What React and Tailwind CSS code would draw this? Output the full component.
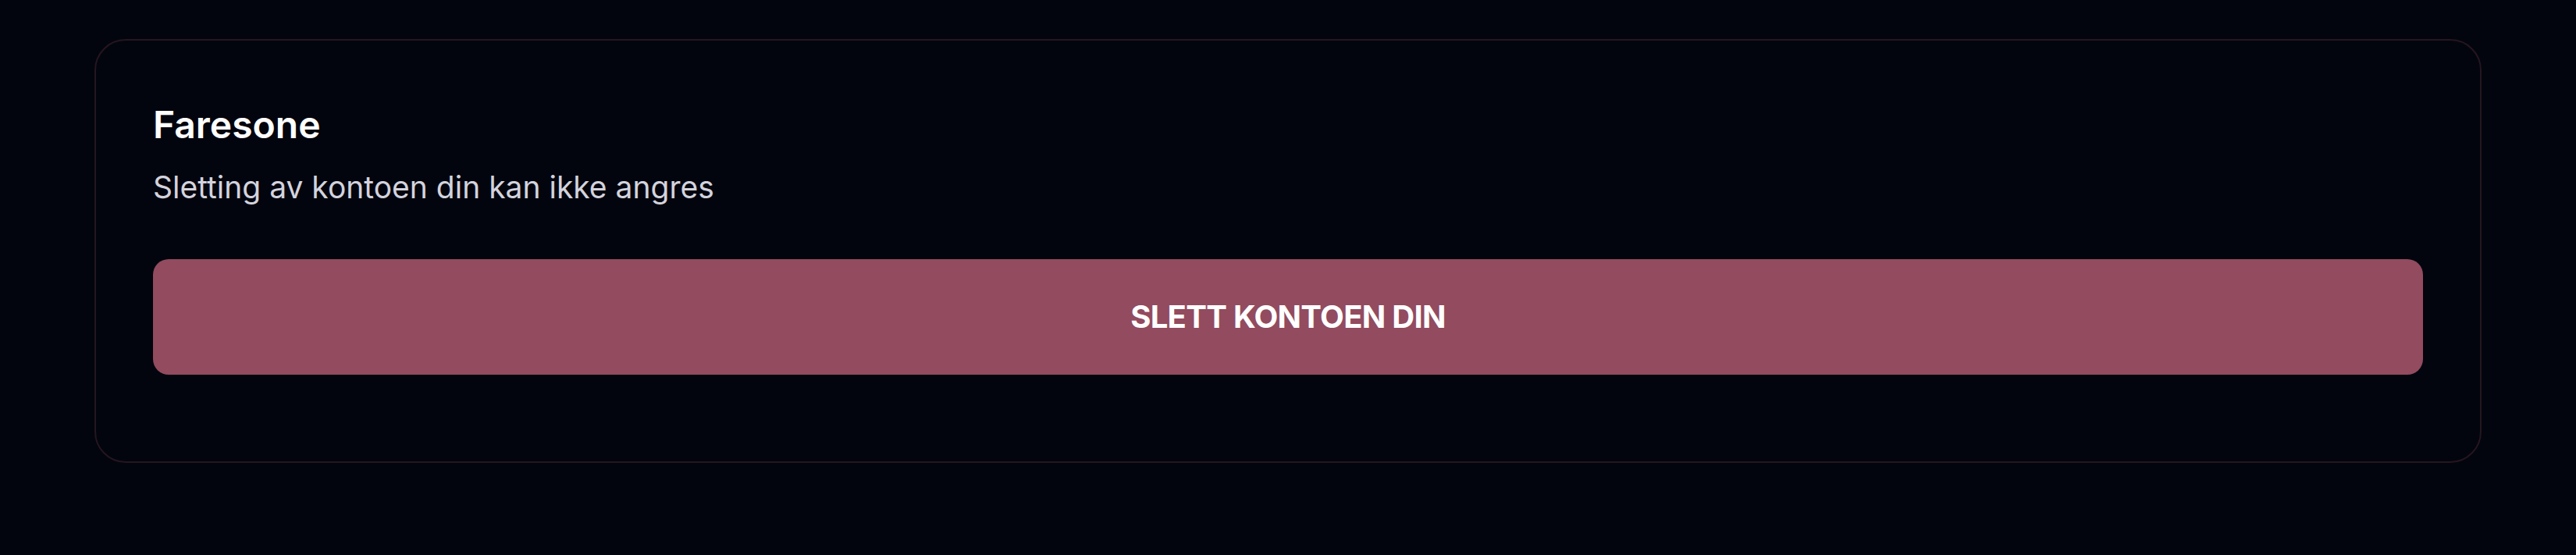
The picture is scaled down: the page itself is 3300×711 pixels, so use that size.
export default function App() {
  return (
    <div className="min-h-[711px] w-full bg-[#03050e] pt-[50px] px-[121px]" style={{ fontFamily: 'Inter, "Noto Sans", sans-serif' }}>
      <div className="rounded-[40px] border-2 border-[#25161f] bg-[#03050e] px-[73px] pt-[72px] pb-[111px]">
        <h2 className="text-[48px] leading-[72px] font-semibold text-white">Faresone</h2>
        <p className="mt-[15px] text-[39px] leading-[58px] text-[#d3d3dd]">Sletting av kontoen din kan ikke angres</p>
        <button className="mt-[63px] flex h-[148px] w-full items-center justify-center rounded-[20px] bg-[#924b5f] text-[40px] font-bold tracking-[-0.7px] text-white">
          SLETT KONTOEN DIN
        </button>
      </div>
    </div>
  );
}
